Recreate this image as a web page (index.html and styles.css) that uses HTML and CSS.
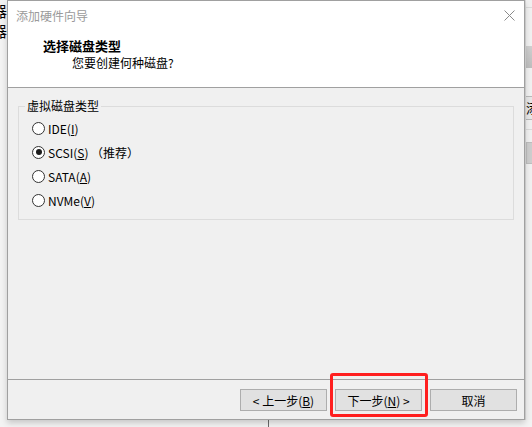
FILE: index.html
```html
<!DOCTYPE html>
<html lang="zh-CN">
<head>
    <meta charset="UTF-8">
    <title>添加硬件向导</title>
    <link rel="stylesheet" href="styles.css">
</head>
<body>
    <div class="screen-top">
        <div class="desk-left">
            <span class="bg-char">器</span>
            <span class="bg-char">器</span>
        </div>

        <div class="dialog">
            <div class="header">
                <div class="title-row">
                    <span class="title">添加硬件向导</span>
                    <svg class="close" width="11" height="11" viewBox="0 0 11 11">
                        <path d="M0.5 0.5 L10.5 10.5 M10.5 0.5 L0.5 10.5" stroke="#8a8a8a" stroke-width="1" fill="none"/>
                    </svg>
                </div>
                <div class="heading">选择磁盘类型</div>
                <div class="subheading">您要创建何种磁盘?</div>
            </div>

            <div class="body">
                <fieldset class="group">
                    <legend>虚拟磁盘类型</legend>
                    <div class="radio-row">
                        <span class="radio"></span>
                        <span>IDE(<u>I</u>)</span>
                    </div>
                    <div class="radio-row">
                        <span class="radio checked"></span>
                        <span>SCSI(<u>S</u>) （推荐）</span>
                    </div>
                    <div class="radio-row">
                        <span class="radio"></span>
                        <span>SATA(<u>A</u>)</span>
                    </div>
                    <div class="radio-row">
                        <span class="radio"></span>
                        <span>NVMe(<u>V</u>)</span>
                    </div>
                </fieldset>
            </div>

            <div class="footer">
                <button class="btn">&lt; 上一步(<u>B</u>)</button>
                <button class="btn btn-marked">下一步(<u>N</u>) &gt;</button>
                <button class="btn">取消</button>
            </div>
        </div>

        <div class="desk-right">
            <div class="strip-line"></div>
            <div class="strip-block"></div>
            <div class="strip-tab"><span>添</span></div>
            <div class="strip-line second"></div>
            <div class="strip-block second"></div>
        </div>
    </div>
    <div class="screen-bottom">
        <div class="bottom-line"></div>
    </div>
</body>
</html>
```

FILE: styles.css
```css
* {
    margin: 0;
    padding: 0;
    box-sizing: border-box;
}

body {
    font-family: "Noto Sans CJK SC", "Noto Sans", sans-serif;
    font-size: 12px;
    color: #000;
    background: #f3f3f3;
    width: 532px;
    height: 427px;
    overflow: hidden;
}

.screen-top {
    display: flex;
    height: 420px;
}

/* bits of the app behind the dialog */
.desk-left {
    width: 7px;
    overflow: hidden;
    padding-top: 2px;
}

.bg-char {
    display: block;
    font-size: 15px;
    line-height: 18px;
    margin-left: -8px;
    margin-bottom: 2px;
}

.desk-right {
    flex: 1;
    overflow: hidden;
    background: #f0f0f0;
    border-left: 1px solid #d8d8d8;
}

.strip-line {
    height: 1px;
    background: #dadada;
    margin-top: 7px;
}

.strip-line.second {
    margin-top: 9px;
}

.strip-block {
    height: 22px;
    margin-top: 38px;
    background: linear-gradient(#cfcfcf, #bdbdbd);
}

.strip-block.second {
    margin-top: 12px;
    border: 1px solid #bdbdbd;
    border-right: none;
    background: #cdcdcd;
}

.strip-tab {
    height: 24px;
    margin-top: 28px;
    border-top: 1px solid #b8b8b8;
    border-bottom: 1px solid #b8b8b8;
    background: #e6e6e6;
    overflow: hidden;
}

.strip-tab span {
    display: block;
    font-size: 13px;
    line-height: 22px;
    margin-left: 0;
}

.screen-bottom {
    height: 7px;
}

.bottom-line {
    margin-left: 268px;
    width: 1px;
    height: 7px;
    background: #6a6a6a;
}

/* dialog */
.dialog {
    width: 518px;
    height: 420px;
    border: 1px solid #a0a0a0;
    background: #f0f0f0;
    display: flex;
    flex-direction: column;
    box-shadow: 0 3px 6px rgba(0, 0, 0, 0.18);
    position: relative;
}

.header {
    background: #fff;
    height: 87px;
    border-bottom: 1px solid #a0a0a0;
    padding-left: 8px;
}

.title-row {
    height: 28px;
    display: flex;
    align-items: center;
    justify-content: space-between;
    padding-right: 9px;
}

.title {
    color: #9a9a9a;
    font-size: 12px;
}

.close {
    display: block;
    margin-top: 1px;
}

.heading {
    font-weight: bold;
    font-size: 13px;
    line-height: 16px;
    margin-top: 9px;
    padding-left: 27px;
}

.subheading {
    line-height: 16px;
    margin-top: 1px;
    padding-left: 56px;
}

.body {
    flex: 1;
    padding: 10px 10px 0 10px;
}

.group {
    border: 1px solid #dcdcdc;
    padding: 2px 10px 7px 6px;
}

.group legend {
    padding: 0 2px;
    line-height: 16px;
}

.radio-row {
    height: 24px;
    display: flex;
    align-items: center;
    gap: 3px;
    padding-left: 7px;
}

.radio {
    width: 13px;
    height: 13px;
    border-radius: 50%;
    border: 1px solid #333;
    background: #fff;
    display: flex;
    align-items: center;
    justify-content: center;
}

.radio.checked::after {
    content: "";
    width: 6px;
    height: 6px;
    border-radius: 50%;
    background: #1c1c1c;
}

.footer {
    border-top: 1px solid #a0a0a0;
    padding: 9px 7px 8px 0;
    display: flex;
    justify-content: flex-end;
    gap: 8px;
}

.btn {
    width: 87px;
    height: 22px;
    background: #e1e1e1;
    border: 1px solid #adadad;
    font-family: inherit;
    font-size: 12px;
    color: #000;
}

.btn-marked {
    position: relative;
}

/* red highlight drawn over the next button */
.btn-marked::after {
    content: "";
    position: absolute;
    top: -17px;
    left: -6px;
    right: -7px;
    bottom: -7px;
    border: 3px solid #ff1f1f;
    border-radius: 3px;
}
```
